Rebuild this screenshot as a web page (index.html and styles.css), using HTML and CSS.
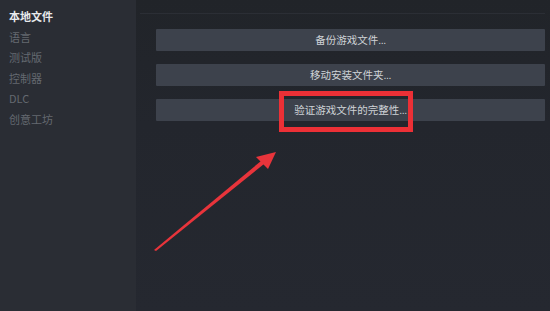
FILE: index.html
```html
<!DOCTYPE html>
<html lang="zh-CN">
<head>
<meta charset="utf-8">
<title>本地文件</title>
<link rel="stylesheet" href="styles.css">
</head>
<body>
<div class="app">
  <nav class="sidebar">
    <div class="nav-item active">本地文件</div>
    <div class="nav-item">语言</div>
    <div class="nav-item">测试版</div>
    <div class="nav-item">控制器</div>
    <div class="nav-item">DLC</div>
    <div class="nav-item">创意工坊</div>
  </nav>
  <main class="main">
    <div class="rule"></div>
    <div class="actions">
      <div class="btn">备份游戏文件<span class="dots">...</span></div>
      <div class="btn">移动安装文件夹<span class="dots">...</span></div>
      <div class="btn">验证游戏文件的完整性<span class="dots">...</span></div>
    </div>
  </main>
</div>
<div class="highlight"></div>
<svg class="arrow" width="550" height="311" viewBox="0 0 550 311">
  <polygon points="154,250 156,251 264,164 261,161" fill="#e8343b"/>
  <polygon points="276,152 256,157 268,169" fill="#e8343b"/>
</svg>
</body>
</html>
```
FILE: styles.css
```css
html, body {
  margin: 0;
  padding: 0;
  width: 550px;
  height: 311px;
  overflow: hidden;
  background: #24272e;
  font-family: "Noto Sans CJK SC", "Noto Sans", sans-serif;
}
.app {
  display: flex;
  width: 550px;
  height: 311px;
}
.sidebar {
  width: 136px;
  flex: 0 0 136px;
  background: #2a2d34;
  padding-top: 6px;
  box-sizing: border-box;
  box-shadow: 2px 0 4px rgba(0,0,0,0.12);
}
.nav-item {
  height: 20.6px;
  line-height: 20.6px;
  padding-left: 9px;
  font-size: 11px;
  color: #646970;
}
.nav-item.active {
  color: #e8eaec;
  font-weight: bold;
}
.main {
  flex: 1;
  background: linear-gradient(180deg, #212429 0%, #23262d 40%, #252830 100%);
  padding: 13px 5px 0 20px;
  box-sizing: border-box;
}
.rule {
  height: 1px;
  background: #2b2e35;
  margin-left: -16px;
}
.actions {
  display: flex;
  flex-direction: column;
  gap: 13px;
  margin-top: 15px;
}
.btn {
  height: 22px;
  line-height: 22px;
  background: #3d424c;
  color: #cfd3d7;
  font-size: 10.5px;
  text-align: center;
  border-radius: 1px;
}
.dots {
  font-family: "Liberation Sans", sans-serif;
  letter-spacing: -0.5px;
}
.highlight {
  position: absolute;
  left: 279px;
  top: 91px;
  width: 124px;
  height: 31px;
  border: 5px solid #ec3036;
}
.arrow {
  position: absolute;
  left: 0;
  top: 0;
}
```
